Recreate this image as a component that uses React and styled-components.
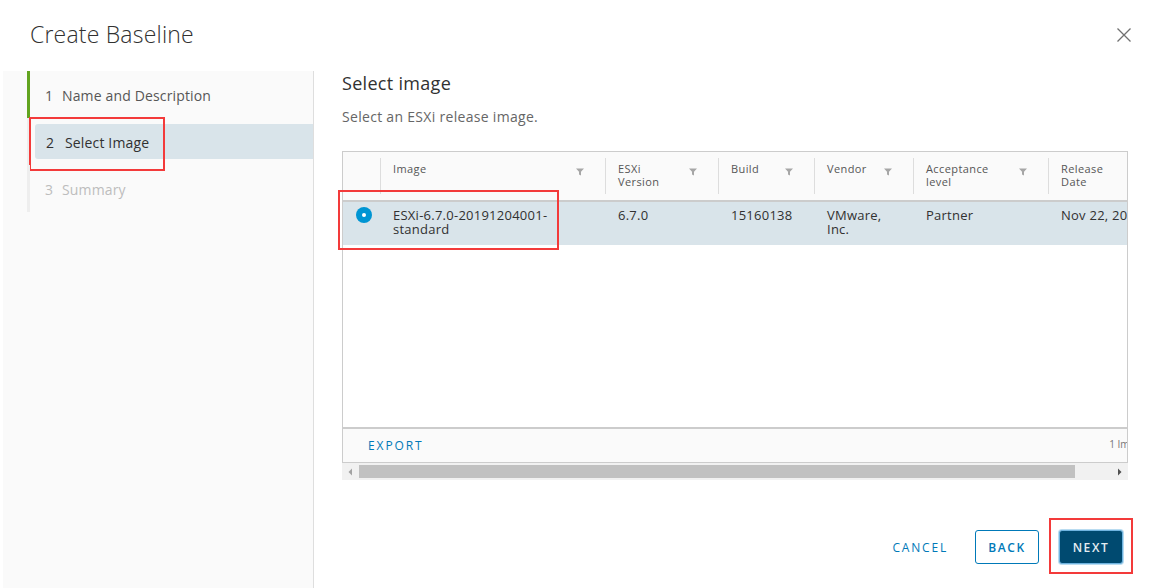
import React from "react";
import styled, { createGlobalStyle, css } from "styled-components";

const Global = createGlobalStyle`
  html, body { margin: 0; padding: 0; background: #fff; }
  body { font-family: "Open Sans", "Liberation Sans", sans-serif; color: #313131; }
  * { box-sizing: border-box; }
`;

const Page = styled.div`
  width: 1157px;
  height: 588px;
  display: flex;
  flex-direction: column;
  overflow: hidden;
  background: #fff;
`;

const Header = styled.header`
  height: 71px;
  flex: none;
  display: flex;
  align-items: center;
  justify-content: space-between;
  padding: 0 25px 2px 30px;
`;

const Title = styled.h1`
  margin: 0 0 2px;
  font-size: 23px;
  font-weight: 300;
  color: #313131;
  letter-spacing: 0.2px;
`;

const CloseBtn = styled.button`
  border: 0;
  background: none;
  padding: 0;
  width: 16px;
  height: 16px;
  display: flex;
  align-items: center;
  justify-content: center;
  cursor: pointer;
`;

const Body = styled.div`
  flex: 1;
  display: flex;
  min-height: 0;
`;

const Sidebar = styled.nav`
  width: 311px;
  margin-left: 3px;
  flex: none;
  background: #fafafa;
  border-right: 1px solid #dedede;
  padding-left: 24px;
`;

const StepList = styled.ol`
  list-style: none;
  margin: 0;
  padding: 0;
`;

const Step = styled.li`
  position: relative;
  height: 47px;
  border-left: 3px solid ${(p) => (p.$done ? "#62a420" : "#eeeeee")};
  display: flex;
  align-items: center;
  padding: 6px 0 6px ${(p) => (p.$active ? "5px" : "0")};
`;

const StepLabel = styled.div`
  flex: 1;
  height: 100%;
  display: flex;
  align-items: center;
  padding-top: 2px;
  padding-left: ${(p) => (p.$active ? "11px" : "15px")};
  font-size: 14px;
  letter-spacing: 0.15px;
  color: ${(p) => (p.$active ? "#313131" : p.$disabled ? "#bdbdbd" : "#565656")};
  background: ${(p) => (p.$active ? "#d9e4ea" : "transparent")};
  border-radius: 3px 0 0 3px;
`;

const StepNum = styled.span`
  width: ${(p) => (p.$active ? "19px" : "17px")};
`;

const Mark = styled.div`
  position: absolute;
  border: 2px solid #f33a3a;
  pointer-events: none;
  ${(p) => css`
    left: ${p.$l}px;
    top: ${p.$t}px;
    width: ${p.$w}px;
    height: ${p.$h}px;
  `}
`;

const Main = styled.main`
  flex: 1;
  display: flex;
  flex-direction: column;
  padding: 0 29px 24px 28px;
  min-width: 0;
`;

const SectionTitle = styled.h2`
  margin: 0;
  font-size: 18px;
  line-height: 24px;
  font-weight: 400;
  letter-spacing: 0.3px;
  color: #313131;
`;

const SectionText = styled.p`
  margin: 13px 0 0;
  font-size: 14px;
  line-height: 18px;
  letter-spacing: 0.3px;
  color: #666;
`;

const TableWrap = styled.div`
  position: relative;
  margin-top: 25px;
  width: 786px;
  flex: none;
`;

const Grid = styled.div`
  height: 312px;
  border: 1px solid #ccc;
  display: flex;
  flex-direction: column;
  overflow: hidden;
  background: #fff;
`;

const cols = "37px 225px 113px 96px 99px 135px 120px";

const HeadRow = styled.div`
  display: grid;
  grid-template-columns: ${cols};
  height: 50px;
  padding: 6px 0;
  background: #fafafa;
  border-bottom: 2px solid #ccc;
  flex: none;
`;

const HeadCell = styled.div`
  display: flex;
  align-items: flex-start;
  justify-content: space-between;
  border-left: ${(p) => (p.$first ? "0" : "1px solid #dddddd")};
  padding: 4px 21px 0 12px;
  font-size: 11px;
  line-height: 13px;
  letter-spacing: 0.4px;
  color: #565656;
`;

const Filter = styled.svg`
  margin-top: 6px;
  flex: none;
`;

const DataRow = styled.div`
  display: grid;
  grid-template-columns: ${cols};
  height: 43px;
  background: #d9e4ea;
  flex: none;
`;

const DataCell = styled.div`
  padding: 6px 12px 0 13px;
  font-size: 13px;
  line-height: 14px;
  letter-spacing: 0.25px;
  color: #313131;
  white-space: nowrap;
`;

const RadioCell = styled.div`
  display: flex;
  justify-content: center;
  padding-top: 5px;
  padding-left: 4px;
`;

const Radio = styled.span`
  width: 16px;
  height: 16px;
  border-radius: 50%;
  background: #0095d3;
  display: flex;
  align-items: center;
  justify-content: center;
  &::after {
    content: "";
    width: 4px;
    height: 4px;
    border-radius: 50%;
    background: #fff;
  }
`;

const EmptyBody = styled.div`
  flex: 1;
`;

const Footer = styled.div`
  flex: none;
  height: 35px;
  border-top: 2px solid #ccc;
  background: #fafafa;
  display: flex;
  align-items: center;
  justify-content: space-between;
  padding: 0 0 0 25px;
  width: 826px;
`;

const LinkBtn = styled.button`
  border: 0;
  background: none;
  padding: 0;
  font-family: inherit;
  font-size: 12px;
  font-weight: 500;
  letter-spacing: 1.9px;
  color: #0079b8;
  text-transform: uppercase;
  cursor: pointer;
`;

const Count = styled.span`
  font-size: 10px;
  color: #777;
  margin-right: 18px;
  padding-bottom: 4px;
`;

const Scrollbar = styled.div`
  height: 17px;
  background: #f1f1f1;
  display: flex;
  align-items: center;
`;

const Arrow = styled.div`
  width: 17px;
  height: 17px;
  display: flex;
  align-items: center;
  justify-content: center;
  flex: none;
`;

const Track = styled.div`
  flex: 1;
  height: 17px;
  display: flex;
  align-items: center;
`;

const Thumb = styled.div`
  width: ${(p) => p.$w}px;
  height: 13px;
  background: #c1c1c1;
`;

const Spacer = styled.div`
  flex: 1;
`;

const Actions = styled.div`
  display: flex;
  justify-content: flex-end;
  gap: 20px;
  margin-right: 5px;
  flex: none;
`;

const Button = styled.button`
  position: relative;
  height: 34px;
  min-width: 64px;
  padding: 0 12px;
  border-radius: 3px;
  font-family: inherit;
  font-size: 12px;
  font-weight: 600;
  letter-spacing: 1.6px;
  text-transform: uppercase;
  cursor: pointer;
  ${(p) =>
    p.$variant === "flat" &&
    css`
      border: 1px solid transparent;
      background: transparent;
      color: #0079b8;
      font-weight: 500;
      letter-spacing: 1.8px;
      padding: 0 6px;
    `}
  ${(p) =>
    p.$variant === "outline" &&
    css`
      border: 1px solid #0079b8;
      background: #fff;
      color: #0079b8;
    `}
  ${(p) =>
    p.$variant === "primary" &&
    css`
      border: 1px solid #6fb4e0;
      background: #004a70;
      color: #e4edf2;
      box-shadow: 0 0 0 1px #b9dcf1;
    `}
`;

const FilterIcon = () => (
  <Filter width="8" height="8" viewBox="0 0 8 8">
    <path d="M0 0.5 H8 L5 3.8 V7.5 L3 6.5 V3.8 Z" fill="#a6a6a6" />
  </Filter>
);

const headers = [
  ["Image"],
  ["ESXi", "Version"],
  ["Build"],
  ["Vendor"],
  ["Acceptance", "level"],
  ["Release", "Date"],
];

export default function App() {
  return (
    <Page>
      <Global />
      <Header>
        <Title>Create Baseline</Title>
        <CloseBtn aria-label="Close">
          <svg width="16" height="16" viewBox="0 0 16 16">
            <path d="M1.5 1.5 L14.5 14.5 M14.5 1.5 L1.5 14.5" stroke="#707070" strokeWidth="1.3" />
          </svg>
        </CloseBtn>
      </Header>
      <Body>
        <Sidebar>
          <StepList>
            <Step $done>
              <StepLabel>
                <StepNum>1</StepNum>Name and Description
              </StepLabel>
            </Step>
            <Step $active>
              <StepLabel $active>
                <StepNum $active>2</StepNum>Select Image
              </StepLabel>
              <Mark $l={-1} $t={-1} $w={136} $h={54} />
            </Step>
            <Step>
              <StepLabel $disabled>
                <StepNum>3</StepNum>Summary
              </StepLabel>
            </Step>
          </StepList>
        </Sidebar>
        <Main>
          <SectionTitle>Select image</SectionTitle>
          <SectionText>Select an ESXi release image.</SectionText>
          <TableWrap>
            <Grid>
              <HeadRow>
                <HeadCell $first />
                {headers.map((h, i) => (
                  <HeadCell key={i}>
                    <span>
                      {h.map((l, j) => (
                        <div key={j}>{l}</div>
                      ))}
                    </span>
                    {i < 5 && <FilterIcon />}
                  </HeadCell>
                ))}
              </HeadRow>
              <DataRow>
                <RadioCell>
                  <Radio />
                </RadioCell>
                <DataCell>
                  ESXi-6.7.0-20191204001-
                  <br />
                  standard
                </DataCell>
                <DataCell>6.7.0</DataCell>
                <DataCell>15160138</DataCell>
                <DataCell>
                  VMware,
                  <br />
                  Inc.
                </DataCell>
                <DataCell>Partner</DataCell>
                <DataCell>Nov 22, 2019</DataCell>
              </DataRow>
              <EmptyBody />
              <Footer>
                <LinkBtn>Export</LinkBtn>
                <Count>1 Images</Count>
              </Footer>
            </Grid>
            <Scrollbar>
              <Arrow>
                <svg width="5" height="8" viewBox="0 0 5 8">
                  <path d="M4 0.5 L0.5 4 L4 7.5 Z" fill="#a3a3a3" />
                </svg>
              </Arrow>
              <Track>
                <Thumb $w={716} />
              </Track>
              <Arrow>
                <svg width="5" height="8" viewBox="0 0 5 8">
                  <path d="M1 0.5 L4.5 4 L1 7.5 Z" fill="#505050" />
                </svg>
              </Arrow>
            </Scrollbar>
            <Mark $l={-4} $t={39} $w={221} $h={60} />
          </TableWrap>
          <Spacer />
          <Actions>
            <Button $variant="flat">Cancel</Button>
            <Button $variant="outline">Back</Button>
            <Button $variant="primary">
              Next
              <Mark $l={-11} $t={-13} $w={84} $h={56} />
            </Button>
          </Actions>
        </Main>
      </Body>
    </Page>
  );
}
